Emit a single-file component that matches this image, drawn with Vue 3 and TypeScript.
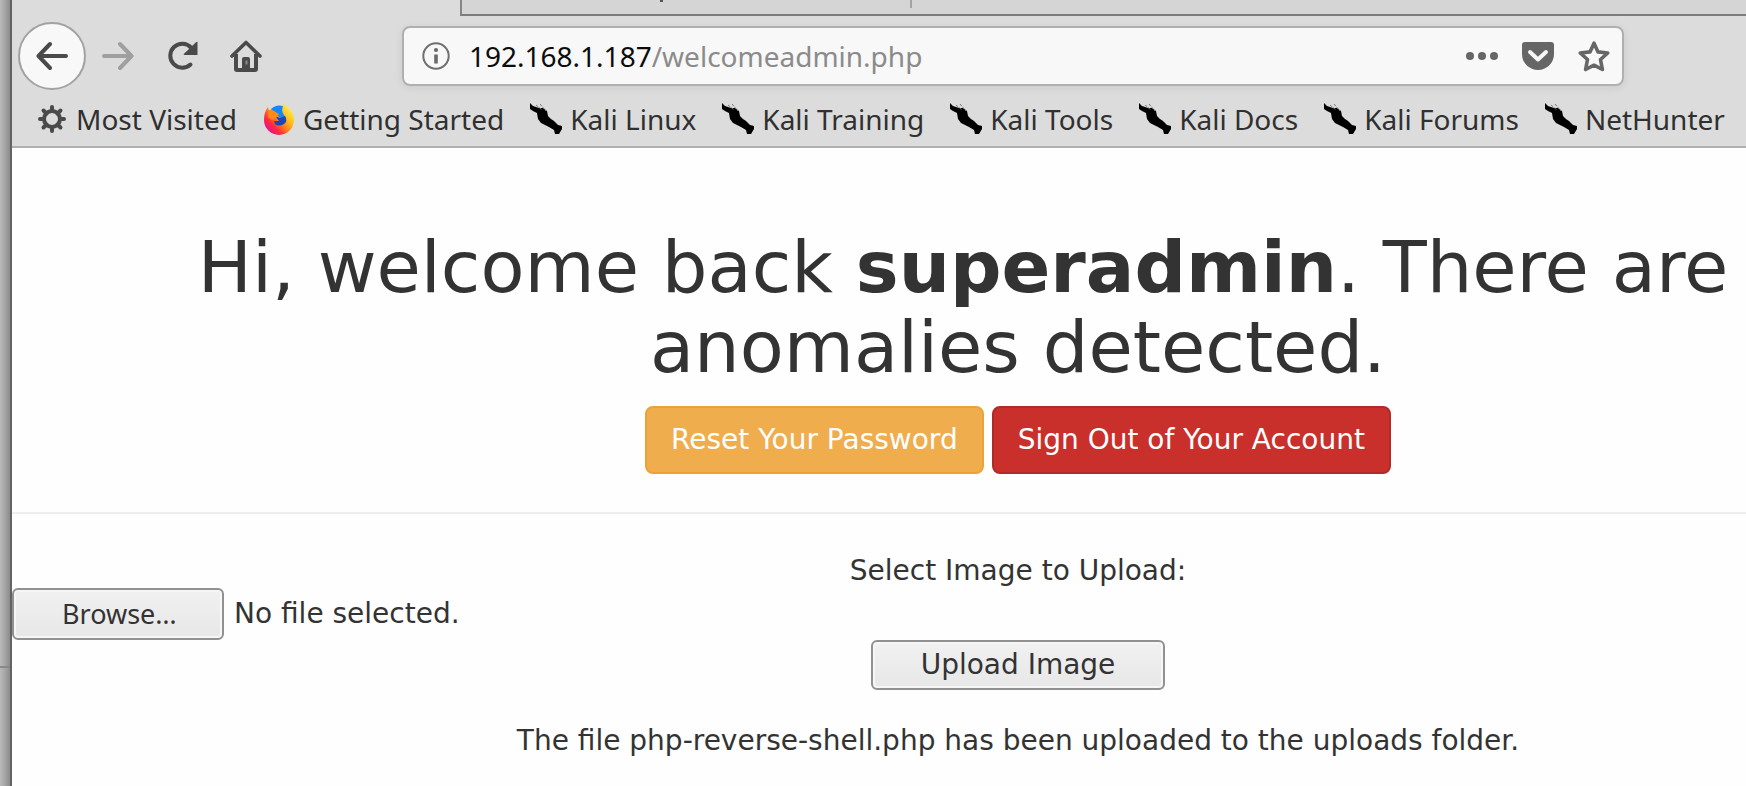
<script setup lang="ts">
import { ref } from 'vue'

interface Bookmark {
  label: string
  icon: 'gear' | 'firefox' | 'kali'
}

const bookmarks: Bookmark[] = [
  { label: 'Most Visited', icon: 'gear' },
  { label: 'Getting Started', icon: 'firefox' },
  { label: 'Kali Linux', icon: 'kali' },
  { label: 'Kali Training', icon: 'kali' },
  { label: 'Kali Tools', icon: 'kali' },
  { label: 'Kali Docs', icon: 'kali' },
  { label: 'Kali Forums', icon: 'kali' },
  { label: 'NetHunter', icon: 'kali' },
]

const fileName = ref('No file selected.')

function onFile(event: Event): void {
  const input = event.target as HTMLInputElement
  fileName.value = input.files?.[0]?.name ?? 'No file selected.'
}
</script>

<template>
  <div class="desktop">
    <div class="edge"><span class="edge-mark"></span></div>
    <div class="window">
      <header class="chrome">
        <div class="tabs">
          <div class="tab"></div>
          <div class="tab tab-last"></div>
        </div>

        <nav class="toolbar" aria-label="Navigation">
          <button class="nav-btn back" type="button" aria-label="Back">
            <svg viewBox="0 0 32 32" class="icon"><path d="M30 16H3M14 4 2.500 16 14 28" fill="none" stroke="#4a4a4a" stroke-width="4" stroke-linecap="round" stroke-linejoin="round" /></svg>
          </button>
          <button class="nav-btn" type="button" aria-label="Forward" disabled>
            <svg viewBox="0 0 32 32" class="icon"><path d="M2 16h27M18 4l11.500 12L18 28" fill="none" stroke="#9f9f9f" stroke-width="4" stroke-linecap="round" stroke-linejoin="round" /></svg>
          </button>
          <button class="nav-btn" type="button" aria-label="Reload">
            <svg viewBox="0 0 32 32" class="icon">
              <path d="M24.500 24.500A12 12 0 1 1 25 7.500l3 4" fill="none" stroke="#4a4a4a" stroke-width="4" stroke-linecap="round" />
              <path d="M31.500 2v13h-13q-1.500 0-.5-1.200L30 2.200q1.500-1 1.500-.2z" fill="#4a4a4a" />
            </svg>
          </button>
          <button class="nav-btn" type="button" aria-label="Home">
            <svg viewBox="0 0 32 32" class="icon">
              <path d="M2 16 16 2.500 30 16" fill="none" stroke="#4a4a4a" stroke-width="3.600" stroke-linecap="round" stroke-linejoin="round" />
              <path d="M6 14v15q0 1 1 1h18q1 0 1-1V14" fill="none" stroke="#4a4a4a" stroke-width="4" />
              <path d="M12 30V19q0-2 2-2h4q2 0 2 2v11z" fill="#4a4a4a" />
              <path d="M16.500 20.500v4" stroke="#8a8a8a" stroke-width="2" />
            </svg>
          </button>

          <div class="url-bar">
            <svg viewBox="0 0 28 28" class="info">
              <circle cx="14" cy="14" r="12.700" fill="none" stroke="#6f6f6f" stroke-width="2" />
              <path d="M14 12.500v9" stroke="#6a6a6a" stroke-width="3.600" />
              <circle cx="14" cy="8" r="2.100" fill="#6a6a6a" />
            </svg>
            <div class="address" role="textbox" aria-label="Address" tabindex="0"><span class="host">192.168.1.187</span>/welcomeadmin.php</div>
            <button class="url-btn" type="button" aria-label="Page actions">
              <svg viewBox="0 0 32 32" class="icon" fill="#666"><circle cx="4" cy="16" r="4" /><circle cx="16" cy="16" r="4" /><circle cx="28" cy="16" r="4" /></svg>
            </button>
            <button class="url-btn" type="button" aria-label="Save to Pocket">
              <svg viewBox="0 0 32 32" class="icon">
                <path d="M3 2h26q3 0 3 3v9a16 16 0 0 1-32 0V5q0-3 3-3z" fill="#666" />
                <path d="m8 12 8 7.500 8-7.500" fill="none" stroke="#f8f8f8" stroke-width="4" stroke-linecap="round" stroke-linejoin="round" />
              </svg>
            </button>
            <button class="url-btn" type="button" aria-label="Bookmark this page">
              <svg viewBox="0 0 32 32" class="icon"><path d="m16 3.200 4 8.700 9.700 1.100-7.200 6.500 1.900 10L16 25.200l-8.400 4.300 1.900-10L2.300 13l9.700-1.100z" fill="none" stroke="#666" stroke-width="3.600" stroke-linejoin="round" /></svg>
            </button>
          </div>
        </nav>

        <nav class="bookmarks" aria-label="Bookmarks">
          <a v-for="item in bookmarks" :key="item.label" class="bookmark" href="#">
            <svg v-if="item.icon === 'gear'" viewBox="0 0 32 32" class="bm-icon">
              <circle cx="16" cy="16" r="8" fill="none" stroke="#4a4a4a" stroke-width="4" />
              <path d="M16 4v4M16 24v4M4 16h4M24 16h4M7.500 7.500l3 3M21.500 21.500l3 3M24.500 7.500l-3 3M10.500 21.500l-3 3" stroke="#4a4a4a" stroke-width="4" stroke-linecap="round" />
            </svg>
            <svg v-else-if="item.icon === 'firefox'" viewBox="0 0 32 32" class="bm-icon">
              <defs>
                <linearGradient id="fox" x1="0.9" y1="0.1" x2="0.15" y2="0.85">
                  <stop offset="0" stop-color="#fff44f" />
                  <stop offset="0.35" stop-color="#ffbd1d" />
                  <stop offset="0.6" stop-color="#ff7a1a" />
                  <stop offset="0.8" stop-color="#ff2a3d" />
                  <stop offset="1" stop-color="#e5168a" />
                </linearGradient>
              </defs>
              <path d="M5 4 6 8Q12 2 20 3L20 0q2 3 5 4 6 6 6 13A15 15 0 0 1 1 17Q1 9 5 4z" fill="url(#fox)" />
              <path d="M8 6q5-5 12-3-2 5 1 9 2 2 2 6l-7-4-3-4z" fill="#1487fb" />
              <path d="m12 13 5 2 5-2q3 5-1 8-5 3-9 0l-1-3 5 0z" fill="#1b45b8" />
              <path d="m6 7 5 1 5 3-2 3-5 3-4-3z" fill="#ff8a16" />
            </svg>
            <svg v-else viewBox="0 0 32 32" class="bm-icon">
              <path d="M0 0 3 3l6 2h4l4 3 1 5 3 3 3 2 4 4 4 1v3l-3 5h-4l-1-4-5-3-8-4-3-4-1-6-4-2-3-2z" fill="#000" />
              <path d="m6 2 6 5M10 1l6 7" stroke="#777" stroke-width="1" stroke-dasharray="3 1" />
            </svg>
            <span>{{ item.label }}</span>
          </a>
        </nav>
      </header>

      <main class="viewport">
        <div class="page">
          <h1>
            <span class="first-line">Hi, welcome back <b>superadmin</b>. There are</span>
            anomalies detected.
          </h1>
          <p class="actions">
            <a class="btn warning" href="#">Reset Your Password</a>
            <a class="btn danger" href="#">Sign Out of Your Account</a>
          </p>
          <hr />
          <form class="upload" @submit.prevent>
            <label for="image-file">Select Image to Upload:</label>
            <div class="file-row">
              <input id="image-file" class="file-input" type="file" @change="onFile" />
              <label class="native browse" for="image-file">Browse…</label>
              <span>{{ fileName }}</span>
            </div>
            <button class="native submit" type="submit">Upload Image</button>
          </form>
          <p class="status">The file php-reverse-shell.php has been uploaded to the uploads folder.</p>
        </div>
      </main>
    </div>
  </div>
</template>

<style>
html,
body {
  margin: 0;
  background: #fff;
}
</style>

<style scoped>
* {
  box-sizing: border-box;
}
.desktop {
  display: flex;
  min-height: 100vh;
  overflow: hidden;
  color: #333;
  font: 28px/40px "DejaVu Sans", sans-serif;
}
.edge {
  flex: 0 0 12px;
  position: relative;
  background: linear-gradient(90deg, #b9b9b9 0, #aaa 4px, #8b8b8b 10px, #636363 10px);
}
.edge-mark {
  position: absolute;
  left: 0;
  right: 2px;
  bottom: 118px;
  height: 2px;
  background: #888;
}
.window {
  flex: 1;
  min-width: 0;
  background: #fefefe;
}
.chrome {
  background: #dcdcdc;
  border-bottom: 2px solid #b0b0b0;
  color: #303030;
  font-family: "Noto Sans", sans-serif;
}
.tabs {
  display: flex;
  height: 16px;
  margin-left: 448px;
  border-left: 2px solid #858585;
  border-bottom: 2px solid #7c7c7c;
  background: #d5d5d5;
}
.tab {
  flex: 0 0 450px;
  height: 8px;
  border-right: 2px solid #a3a3a3;
  background: linear-gradient(#555, #555) 198px 0 / 3px 2px no-repeat;
}
.tab-last {
  flex: 1;
  border: 0;
  background: none;
}
.toolbar {
  display: flex;
  align-items: center;
  height: 80px;
  padding-left: 6px;
}
button {
  font: inherit;
  color: inherit;
}
.nav-btn {
  display: grid;
  place-items: center;
  width: 64px;
  height: 68px;
  padding: 0;
  border: 0;
  background: none;
}
.back {
  width: 68px;
  border: 2px solid #a2a2a2;
  border-radius: 50%;
  background: #f8f8f8;
}
.icon {
  display: block;
  width: 32px;
  height: 32px;
}
.url-bar {
  display: flex;
  align-items: center;
  flex: 1;
  height: 60px;
  margin: 0 122px 0 124px;
  padding: 0 12px 0 18px;
  border: 2px solid #b0b0b0;
  border-radius: 8px;
  background: #f8f8f8;
  box-shadow: 0 2px 8px rgba(0, 0, 0, 0.08);
}
.info {
  width: 28px;
  height: 28px;
}
.address {
  flex: 1;
  margin-left: 19px;
  color: #8b8b8b;
  white-space: nowrap;
}
.host {
  color: #0c0c0c;
}
.url-btn {
  padding: 0;
  margin-left: 24px;
  border: 0;
  background: none;
}
.bookmarks {
  display: flex;
  gap: 26px;
  height: 50px;
  padding-left: 24px;
  white-space: nowrap;
}
.bookmark {
  display: flex;
  align-items: center;
  gap: 8px;
  height: 46px;
  color: inherit;
  text-decoration: none;
}
.bm-icon {
  flex: none;
  width: 32px;
  height: 32px;
}
.viewport {
  overflow: hidden;
}
/* The document is wider than the visible part of the window. */
.page {
  width: calc(100% + 278px);
  padding-top: 79px;
  text-align: center;
}
h1 {
  margin: 0 0 19px;
  font-size: 72px;
  font-weight: 400;
  line-height: 80px;
}
.first-line {
  display: block;
  padding-right: 110px;
}
.actions {
  display: flex;
  justify-content: center;
  gap: 8px;
  margin: 0;
}
.btn {
  padding: 12px 24px;
  border: 2px solid;
  border-radius: 8px;
  color: #fff;
  text-decoration: none;
}
.warning {
  border-color: #eea236;
  background: #f0ad4e;
}
.danger {
  border-color: #b02a28;
  background: #c9302c;
}
hr {
  height: 2px;
  margin: 38px 0 37px;
  border: 0;
  background: #eee;
}
.upload {
  display: flex;
  flex-direction: column;
  align-items: center;
}
.file-row {
  display: flex;
  align-items: center;
  align-self: stretch;
  gap: 10px;
  margin-top: -3px;
}
.file-input {
  position: absolute;
  width: 1px;
  height: 1px;
  opacity: 0;
}
.native {
  height: 52px;
  padding: 0 48px;
  border: 2px solid #919191;
  border-radius: 6px;
  background: linear-gradient(#f1f1f1, #e7e7e7);
  box-shadow: inset 0 0 0 2px #f6f6f6;
}
.browse {
  width: 212px;
  font: 27px/48px "Noto Sans", sans-serif;
}
.submit {
  height: 50px;
}
.status {
  margin: 31px 0 0;
}
</style>
